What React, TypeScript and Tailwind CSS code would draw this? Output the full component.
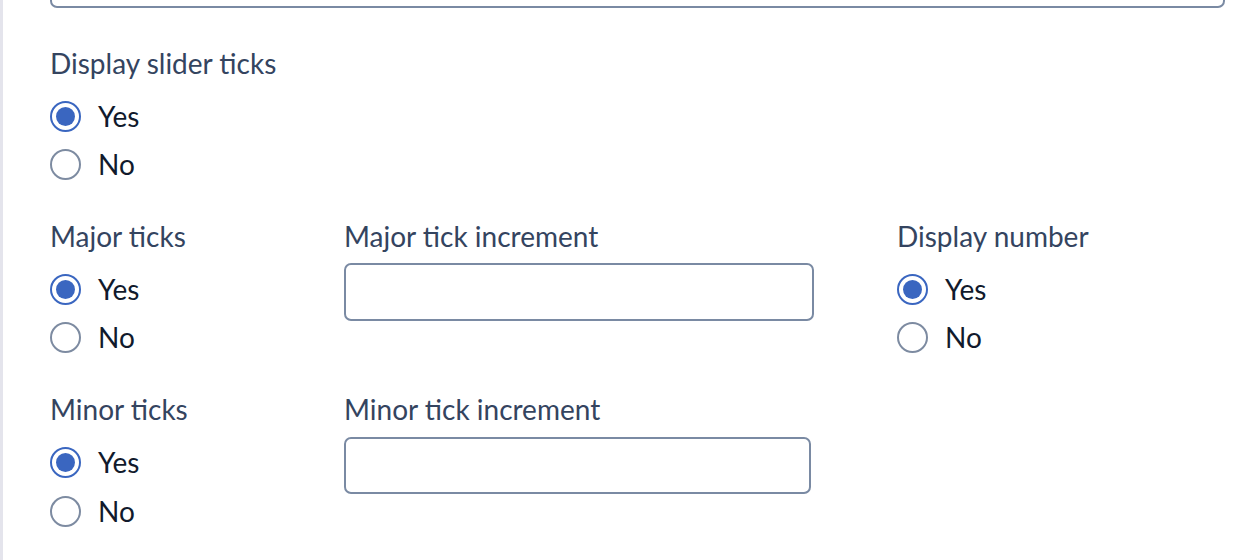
import React from "react";

const font = { fontFamily: "Lato, 'Open Sans', sans-serif" };

function Radio({ label, checked }: { label: string; checked?: boolean }) {
  return (
    <label className="flex h-[48px] items-center">
      <span
        className={
          "flex h-[31px] w-[31px] items-center justify-center rounded-full border-2 bg-white " +
          (checked ? "border-[#3a66c0]" : "border-[#7d8ba1]")
        }
      >
        {checked && <span className="h-[19px] w-[19px] rounded-full bg-[#3a66c0]" />}
      </span>
      <span className="ml-[17px] text-[28px] leading-[36px] text-[#111a2c]">{label}</span>
    </label>
  );
}

function YesNo({ last }: { last?: boolean }) {
  return (
    <div className="mt-[11px] flex flex-col">
      <Radio label="Yes" checked />
      <div className={last ? "mt-[1px]" : ""}>
        <Radio label="No" />
      </div>
    </div>
  );
}

function Label({ children }: { children: React.ReactNode }) {
  return <div className="text-[28px] leading-[36px] text-[#34445f]">{children}</div>;
}

export default function App() {
  return (
    <div className="flex h-[560px] w-[1238px] overflow-hidden bg-white" style={font}>
      <div className="w-[3px] shrink-0 bg-[#e4e4ec]" />
      <div className="flex w-[1222px] flex-col pl-[47px]">
        {/* bottom of the previous field */}
        <div className="-mt-[49px] h-[57px] w-[1175px] rounded-[7px] border-2 border-[#7a8aa3]" />

        {/* Display slider ticks */}
        <div className="mt-[37px]">
          <Label>Display slider ticks</Label>
          <YesNo />
        </div>

        {/* Major ticks row */}
        <div className="mt-[30px] grid grid-cols-[294px_553px_1fr]">
          <div>
            <Label>Major ticks</Label>
            <YesNo />
          </div>
          <div>
            <Label>Major tick increment</Label>
            <input className="mt-[9px] h-[58px] w-[470px] rounded-[7px] border-2 border-[#7a8aa3] bg-white outline-none" />
          </div>
          <div>
            <Label>Display number</Label>
            <YesNo />
          </div>
        </div>

        {/* Minor ticks row */}
        <div className="mt-[30px] grid grid-cols-[294px_553px_1fr]">
          <div>
            <Label>Minor ticks</Label>
            <YesNo last />
          </div>
          <div>
            <Label>Minor tick increment</Label>
            <input className="mt-[10px] h-[57px] w-[467px] rounded-[7px] border-2 border-[#7a8aa3] bg-white outline-none" />
          </div>
          <div />
        </div>
      </div>
    </div>
  );
}
